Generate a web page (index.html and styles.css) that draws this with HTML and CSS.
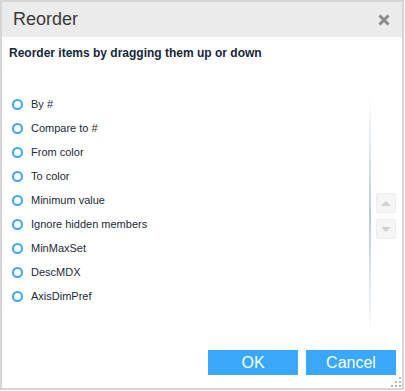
FILE: index.html
```html
<!DOCTYPE html>
<html lang="en">
<head>
	<meta charset="UTF-8">
	<title>Reorder</title>
	<link rel="stylesheet" href="styles.css">
</head>
<body>
<div class="dialog">
	<div class="titlebar">
		<span class="title">Reorder</span>
		<span class="close">
			<svg width="12" height="12" viewBox="0 0 12 12">
				<path d="M1.5 1.5 L10.5 10.5 M10.5 1.5 L1.5 10.5" stroke="#8a8a8a" stroke-width="3" fill="none"/>
			</svg>
		</span>
	</div>
	<div class="hint">Reorder items by dragging them up or down</div>

	<div class="content">
		<ul class="items">
			<li><span class="dot"></span>By #</li>
			<li><span class="dot"></span>Compare to #</li>
			<li><span class="dot"></span>From color</li>
			<li><span class="dot"></span>To color</li>
			<li><span class="dot"></span>Minimum value</li>
			<li><span class="dot"></span>Ignore hidden members</li>
			<li><span class="dot"></span>MinMaxSet</li>
			<li><span class="dot"></span>DescMDX</li>
			<li><span class="dot"></span>AxisDimPref</li>
		</ul>
		<div class="rail"></div>
		<div class="arrows">
			<button type="button" class="arrow"><span class="tri up"></span></button>
			<button type="button" class="arrow"><span class="tri down"></span></button>
		</div>
	</div>

	<div class="footer">
		<button type="button" class="btn">OK</button>
		<button type="button" class="btn">Cancel</button>
	</div>
	<div class="grip">
		<svg width="10" height="10" viewBox="0 0 10 10">
			<rect x="8" y="0" width="2" height="2" fill="#b9b9a6"/>
			<rect x="4" y="4" width="2" height="2" fill="#b9b9a6"/>
			<rect x="8" y="4" width="2" height="2" fill="#b9b9a6"/>
			<rect x="0" y="8" width="2" height="2" fill="#b9b9a6"/>
			<rect x="4" y="8" width="2" height="2" fill="#b9b9a6"/>
			<rect x="8" y="8" width="2" height="2" fill="#b9b9a6"/>
		</svg>
	</div>
</div>
</body>
</html>
```

FILE: styles.css
```css
html, body{
	margin: 0;
	padding: 0;
	background: white;
}

.dialog{
	position: relative;
	box-sizing: border-box;
	width: 404px;
	height: 390px;
	border: 2px solid #d6d6d6;
	background: white;
	font-family: "Liberation Sans", Arial, sans-serif;
	color: #1d2a38;
}

.titlebar{
	height: 35px;
	background: #ececec;
	display: flex;
	align-items: center;
	justify-content: space-between;
	padding: 0 12px 0 11px;
}

.title{
	font-size: 18px;
	color: #3a3a3a;
}

.close{
	line-height: 0;
	margin-top: 1px;
}

.hint{
	font-size: 12px;
	font-weight: bold;
	padding: 9px 7px 0;
	height: 20px;
	color: #15283a;
}

.content{
	display: flex;
	height: 246px;
	margin-top: 29px;
}

.items{
	list-style: none;
	margin: 0;
	padding: 0 0 0 10px;
	flex: 1;
	font-size: 11px;
	color: #1d2a38;
}

.items li{
	display: flex;
	align-items: center;
	height: 24px;
}

.items li:first-child{
	margin-top: -3px;
}

.dot{
	box-sizing: border-box;
	width: 11px;
	height: 11px;
	border: 2px solid #3ba7f5;
	border-radius: 50%;
	margin-right: 8px;
}

.rail{
	width: 2px;
	height: 240px;
	background: linear-gradient(#ffffff, #b8cad8 50%, #ffffff);
	margin-right: 5px;
	margin-left: 2px;
}

.arrows{
	display: flex;
	flex-direction: column;
	gap: 6px;
	margin-top: 98px;
	margin-right: 6px;
}

.arrow{
	box-sizing: border-box;
	width: 20px;
	height: 20px;
	padding: 0;
	border: 1px solid #eeeeee;
	border-radius: 2px;
	background: #f6f6f6;
	display: flex;
	align-items: center;
	justify-content: center;
}

.tri{
	width: 0;
	height: 0;
	border-left: 5px solid transparent;
	border-right: 5px solid transparent;
}

.tri.up{
	border-bottom: 5px solid #d2d2d2;
}

.tri.down{
	border-top: 5px solid #d2d2d2;
}

.footer{
	display: flex;
	justify-content: flex-end;
	gap: 8px;
	padding: 9px 6px 0 0;
}

.btn{
	width: 90px;
	height: 25px;
	border: none;
	background: #39a8fb;
	color: white;
	font-family: "Liberation Sans", Arial, sans-serif;
	font-size: 16px;
	padding: 0;
}

.grip{
	position: absolute;
	right: 1px;
	bottom: 1px;
	line-height: 0;
}
```
